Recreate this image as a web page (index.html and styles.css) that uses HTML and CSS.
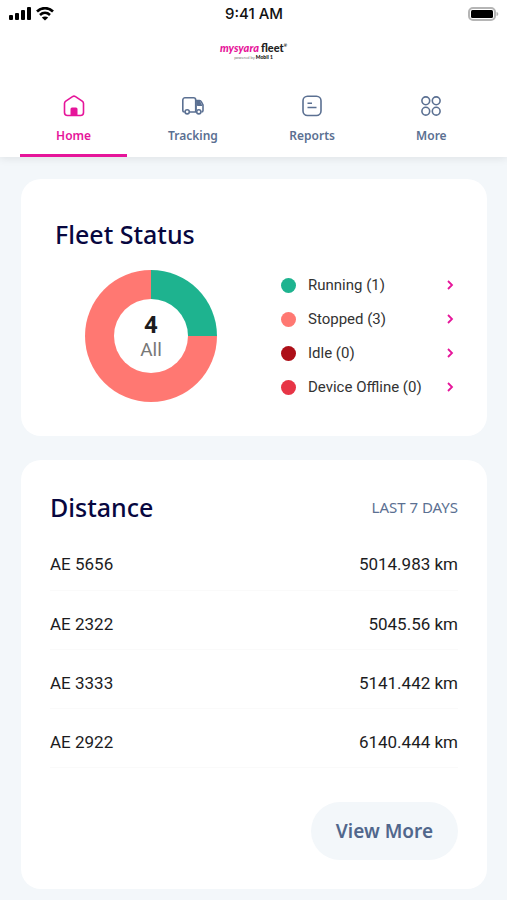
FILE: index.html
```html
<!DOCTYPE html>
<html lang="en">
<head>
	<meta charset="UTF-8">
	<meta name="viewport" content="width=device-width, initial-scale=1">
	<title>mysyara fleet</title>
	<link rel="stylesheet" href="styles.css">
</head>
<body>
	<header class="header">
		<div class="statusbar">
			<div class="signal">
				<svg width="22" height="14" viewBox="0 0 22 14">
					<rect x="0" y="8" width="4" height="5" rx="1"/>
					<rect x="6" y="6" width="4" height="7" rx="1"/>
					<rect x="12" y="3" width="4" height="10" rx="1"/>
					<rect x="18" y="0" width="4" height="13" rx="1"/>
				</svg>
				<svg width="18" height="14" viewBox="0 0 18 14">
					<path d="M1 4.500C5.500 0 12.500 0 17 4.500M4 8c3-2.800 7-2.800 10 0" fill="none" stroke="#000" stroke-width="2.600"/>
					<path d="M9 13.500 5.800 10.600c1.900-1.600 4.500-1.600 6.400 0z"/>
				</svg>
			</div>
			<span class="time">9:41 AM</span>
			<svg class="battery" width="31" height="15" viewBox="0 0 31 15">
				<rect x="1" y="1" width="26" height="12" rx="4" fill="#fff" stroke="#b5b5b5" stroke-width="2"/>
				<rect x="3" y="3" width="22" height="8" rx="1.500"/>
				<path d="M28.500 5c2.400 .8 2.400 3.200 0 4z" fill="#b5b5b5"/>
			</svg>
		</div>
		<div class="logo">
			<div class="logo-name"><span class="logo-pink">mysyara</span><span class="logo-fleet">fleet</span><sup>®</sup></div>
			<div class="logo-powered">powered by <b>Mobil 1</b></div>
		</div>
		<nav class="tabs">
			<a class="tab active" href="#">
				<svg width="22" height="22" viewBox="0 0 22 22" fill="none" stroke="currentColor" stroke-width="1.600">
					<path d="M1.500 8.500C1.500 7.500 2 6.800 2.800 6.200L9.500 1.700C10.500 1 11.500 1 12.500 1.700L19.200 6.200C20 6.800 20.500 7.500 20.500 8.500V17.500A3 3 0 0 1 17.500 20.500H4.500A3 3 0 0 1 1.500 17.500Z"/>
					<path d="M7.500 20.500V14a1.500 1.500 0 0 1 1.500-1.500h4A1.500 1.500 0 0 1 14.500 14v6.500z" fill="currentColor" stroke="none"/>
				</svg>
				<span>Home</span>
			</a>
			<a class="tab" href="#">
				<svg width="22" height="22" viewBox="0 0 22 22" fill="none" stroke="currentColor" stroke-width="1.600">
					<path d="M2.700 17H2.500A1.700 1.700 0 0 1 .8 15.300V5A2.200 2.200 0 0 1 3 2.800H11.500A2.200 2.200 0 0 1 13.700 5V16.500M7.700 17H14"/>
					<path d="M14 5.500H17.500C18.500 5.500 19 6 19.500 7L21 10V15.500A1.500 1.500 0 0 1 19.500 17M14 5.500V15"/>
					<path d="M14.500 5.500H17.800L20.500 11H16A1.500 1.500 0 0 1 14.500 9.500Z" fill="currentColor" stroke="none"/>
					<circle cx="5.200" cy="16.800" r="2.100"/>
					<circle cx="16.800" cy="16.800" r="2.100"/>
				</svg>
				<span>Tracking</span>
			</a>
			<a class="tab" href="#">
				<svg width="22" height="22" viewBox="0 0 22 22" fill="none" stroke="currentColor" stroke-width="1.600">
					<rect x="2" y="1.300" width="18" height="19.200" rx="4.500"/>
					<path d="M6.500 8.200H11M6.500 12.500H15.500"/>
				</svg>
				<span>Reports</span>
			</a>
			<a class="tab" href="#">
				<svg width="22" height="22" viewBox="0 0 22 22" fill="none" stroke="currentColor" stroke-width="1.600">
					<circle cx="5.800" cy="5.800" r="3.900"/>
					<circle cx="16.200" cy="5.800" r="3.900"/>
					<circle cx="5.800" cy="16.200" r="3.900"/>
					<circle cx="16.200" cy="16.200" r="3.900"/>
				</svg>
				<span>More</span>
			</a>
		</nav>
	</header>
	<main class="content">
		<section class="card status">
			<h2>Fleet Status</h2>
			<div class="status-body">
				<div class="chart">
					<div class="chart-hole">
						<strong>4</strong>
						<span>All</span>
					</div>
				</div>
				<ul class="legend">
					<li><a href="#"><i class="dot running"></i><span>Running (1)</span><svg width="8" height="12" viewBox="0 0 8 12"><path d="M1 2 5 6l-4 4"/></svg></a></li>
					<li><a href="#"><i class="dot stopped"></i><span>Stopped (3)</span><svg width="8" height="12" viewBox="0 0 8 12"><path d="M1 2 5 6l-4 4"/></svg></a></li>
					<li><a href="#"><i class="dot idle"></i><span>Idle (0)</span><svg width="8" height="12" viewBox="0 0 8 12"><path d="M1 2 5 6l-4 4"/></svg></a></li>
					<li><a href="#"><i class="dot offline"></i><span>Device Offline (0)</span><svg width="8" height="12" viewBox="0 0 8 12"><path d="M1 2 5 6l-4 4"/></svg></a></li>
				</ul>
			</div>
		</section>
		<section class="card distance">
			<div class="distance-head">
				<h2>Distance</h2>
				<span>LAST 7 DAYS</span>
			</div>
			<table class="distance-table">
				<tr><th scope="row">AE 5656</th><td>5014.983 km</td></tr>
				<tr><th scope="row">AE 2322</th><td>5045.56 km</td></tr>
				<tr><th scope="row">AE 3333</th><td>5141.442 km</td></tr>
				<tr><th scope="row">AE 2922</th><td>6140.444 km</td></tr>
			</table>
			<button class="more" type="button">View More</button>
		</section>
	</main>
</body>
</html>
```
FILE: styles.css
```css
* {
	padding: 0;
	margin: 0;
	box-sizing: border-box;
}
body {
	font-family: Roboto, sans-serif;
	color: #1c1c1e;
	background-color: #f3f7fa;
}
a {
	color: inherit;
	text-decoration: none;
}
svg {
	display: block;
}
h2 {
	font: 500 25px/32px "Noto Sans", sans-serif;
	color: #07073f;
}
.header {
	background-color: #fff;
	box-shadow: 0 2px 8px rgba(0, 0, 0, 0.08);
}
.statusbar {
	display: grid;
	grid-template-columns: 1fr auto 1fr;
	align-items: center;
	height: 28px;
	padding: 0 8px 0 9px;
}
.signal {
	display: flex;
	gap: 5px;
}
.time {
	font: 500 15px/20px Inter, sans-serif;
	color: #111;
}
.battery {
	justify-self: end;
}
.logo {
	height: 52px;
	padding-top: 13px;
	text-align: center;
	font-family: Lato, sans-serif;
}
.logo-name {
	font-size: 11px;
	line-height: 13px;
	font-weight: 900;
	color: #222;
}
.logo-pink {
	margin-right: 2px;
	font-style: italic;
	color: #e6159a;
}
.logo-name sup {
	font-size: 4px;
	line-height: 4px;
	vertical-align: 5px;
}
.logo-powered {
	font-size: 4px;
	line-height: 6px;
	color: #777;
}
.logo-powered b {
	font-size: 5px;
	font-weight: 900;
	color: #111;
}
.tabs {
	display: flex;
	padding: 0 16px 0 14px;
}
.tab {
	display: flex;
	flex: 1;
	flex-direction: column;
	align-items: center;
	gap: 10px;
	height: 77px;
	margin: 0 6px;
	padding-top: 15px;
	border-bottom: 3px solid transparent;
	font: 600 12px/18px "Noto Sans", sans-serif;
	color: #5b7092;
}
.tab.active {
	color: #e6159a;
	border-color: #e6159a;
}
.content {
	display: flex;
	flex-direction: column;
	gap: 24px;
	padding: 22px 20px 11px 21px;
}
.card {
	border-radius: 20px;
	background-color: #fff;
}
.status {
	padding: 39px 32px 32px 34px;
}
.status-body {
	display: flex;
	align-items: center;
	justify-content: space-between;
	margin-top: 18px;
	padding-left: 30px;
}
.chart {
	display: flex;
	align-items: center;
	justify-content: center;
	width: 132px;
	height: 132px;
	border-radius: 50%;
	background: conic-gradient(#1eb38f 25%, #ff7872 0);
}
.chart-hole {
	display: flex;
	flex-direction: column;
	align-items: center;
	justify-content: center;
	width: 74px;
	height: 74px;
	padding-top: 2px;
	border-radius: 50%;
	background-color: #fff;
}
.chart-hole strong {
	font-size: 24px;
	line-height: 26px;
}
.chart-hole span {
	font-size: 19px;
	line-height: 24px;
	color: #777;
}
.legend {
	width: 174px;
	list-style: none;
}
.legend a {
	display: flex;
	align-items: center;
	height: 34px;
	font-size: 15px;
	color: #333;
}
.legend span {
	flex: 1;
}
.legend path {
	fill: none;
	stroke: #e6159a;
	stroke-width: 1.8;
}
.dot {
	width: 15px;
	height: 15px;
	margin-right: 12px;
	border-radius: 50%;
}
.running {
	background-color: #1eb38f;
}
.stopped {
	background-color: #ff7872;
}
.idle {
	background-color: #ad0f18;
}
.offline {
	background-color: #e73546;
}
.distance {
	padding: 31px 29px 29px;
}
.distance-head {
	display: flex;
	align-items: center;
	justify-content: space-between;
}
.distance-head span {
	font: 15px/20px "Noto Sans", sans-serif;
	color: #5b7092;
}
.distance-table {
	width: 100%;
	margin-top: 8px;
	border-collapse: collapse;
	font-size: 17px;
}
.distance-table th,
.distance-table td {
	height: 59px;
	padding-top: 8px;
	border-bottom: 1px solid #fafafa;
	font-weight: 400;
	text-align: left;
}
.distance-table td {
	text-align: right;
}
.more {
	display: block;
	height: 58px;
	margin: 34px 0 0 auto;
	padding: 0 25px;
	border: 0;
	border-radius: 29px;
	background-color: #f3f7fa;
	font: 600 19px/26px "Noto Sans", sans-serif;
	color: #51678c;
	cursor: pointer;
}
```
